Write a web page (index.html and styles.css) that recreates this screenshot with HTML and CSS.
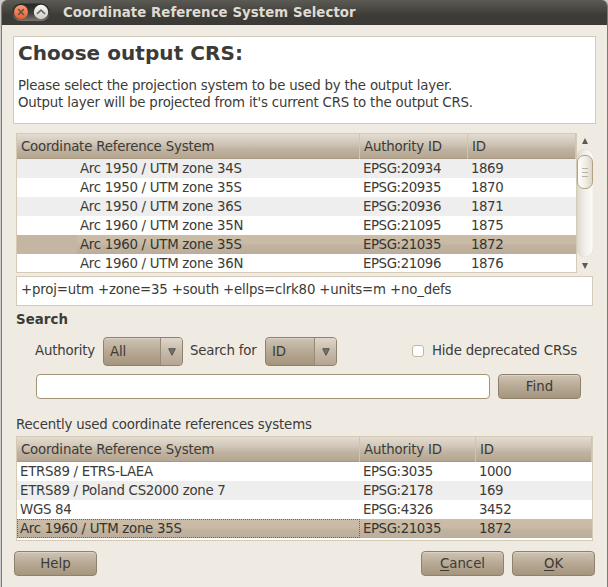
FILE: index.html
```html
<!DOCTYPE html>
<html lang="en">
<head>
<meta charset="utf-8">
<title>Coordinate Reference System Selector</title>
<link rel="stylesheet" href="styles.css">
</head>
<body>
<div class="window">
  <header class="titlebar">
    <div class="controls">
      <svg width="40" height="20" viewBox="0 0 40 20">
        <defs>
          <linearGradient id="pill" x1="0" y1="0" x2="0" y2="1"><stop offset="0" stop-color="#292825"/><stop offset=".55" stop-color="#3b3a37"/><stop offset="1" stop-color="#777670"/></linearGradient>
          <linearGradient id="red" x1="0" y1="0" x2="0" y2="1"><stop offset="0" stop-color="#f89a78"/><stop offset="1" stop-color="#e9602c"/></linearGradient>
          <linearGradient id="gray" x1="0" y1="0" x2="0" y2="1"><stop offset="0" stop-color="#fbfaf8"/><stop offset="1" stop-color="#cfcbc3"/></linearGradient>
        </defs>
        <rect x="1" y="0.500" width="38" height="17.5" rx="8.7" fill="url(#pill)"/>
        <circle cx="10" cy="9" r="7" fill="url(#red)"/>
        <path d="M7.200 6.200l5.600 5.600M12.800 6.200l-5.600 5.600" stroke="#6b5548" stroke-width="1.700"/>
        <circle cx="30" cy="9" r="7.200" fill="url(#gray)"/>
        <path d="M26 10.800l4-3.600 4 3.600" fill="none" stroke="#6b6964" stroke-width="1.700"/>
      </svg>
    </div>
    <h1 class="title">Coordinate Reference System Selector</h1>
  </header>

  <section class="intro">
    <h2>Choose output CRS:</h2>
    <p>Please select the projection system to be used by the output layer.<br>Output layer will be projected from it's current CRS to the output CRS.</p>
  </section>

  <div class="tree">
    <div class="table systems">
      <div class="row head"><span>Coordinate Reference System</span><span>Authority ID</span><span>ID</span></div>
      <div class="row alt"><span>Arc 1950 / UTM zone 34S</span><span>EPSG:20934</span><span>1869</span></div>
      <div class="row"><span>Arc 1950 / UTM zone 35S</span><span>EPSG:20935</span><span>1870</span></div>
      <div class="row alt"><span>Arc 1950 / UTM zone 36S</span><span>EPSG:20936</span><span>1871</span></div>
      <div class="row"><span>Arc 1960 / UTM zone 35N</span><span>EPSG:21095</span><span>1875</span></div>
      <div class="row selected"><span>Arc 1960 / UTM zone 35S</span><span>EPSG:21035</span><span>1872</span></div>
      <div class="row"><span>Arc 1960 / UTM zone 36N</span><span>EPSG:21096</span><span>1876</span></div>
    </div>
    <div class="scrollbar">
      <svg class="arrow" width="6" height="6" viewBox="0 0 6 6"><path d="M3 0L6 6H0z"/></svg>
      <div class="track"><div class="thumb"><i></i><i></i><i></i></div></div>
      <svg class="arrow" width="6" height="6" viewBox="0 0 6 6"><path d="M0 0H6L3 6z"/></svg>
    </div>
  </div>

  <div class="proj">+proj=utm +zone=35 +south +ellps=clrk80 +units=m +no_defs</div>

  <h3 class="search-title">Search</h3>
  <div class="filters">
    <span class="authority">Authority</span>
    <div class="combo wide"><span>All</span><b><svg width="8" height="8" viewBox="0 0 8 8"><path d="M.7 .7H7.300L4 7.300z"/></svg></b></div>
    <span class="search-for">Search for</span>
    <div class="combo"><span>ID</span><b><svg width="8" height="8" viewBox="0 0 8 8"><path d="M.7 .7H7.300L4 7.300z"/></svg></b></div>
    <label class="deprecated"><span class="check"></span><span>Hide deprecated CRSs</span></label>
  </div>
  <div class="find-row"><div class="field"></div><div class="button">Find</div></div>

  <h4 class="recent-title">Recently used coordinate references systems</h4>
  <div class="table recent">
    <div class="row head"><span>Coordinate Reference System</span><span>Authority ID</span><span>ID</span></div>
    <div class="row"><span>ETRS89 / ETRS-LAEA</span><span>EPSG:3035</span><span>1000</span></div>
    <div class="row alt"><span>ETRS89 / Poland CS2000 zone 7</span><span>EPSG:2178</span><span>169</span></div>
    <div class="row"><span>WGS 84</span><span>EPSG:4326</span><span>3452</span></div>
    <div class="row selected"><span class="focus">Arc 1960 / UTM zone 35S</span><span>EPSG:21035</span><span>1872</span></div>
  </div>

  <footer class="actions">
    <div class="button help">Help</div>
    <div class="button"><span><u>C</u>ancel</span></div>
    <div class="button"><span><u>O</u>K</span></div>
  </footer>
</div>
</body>
</html>
```
FILE: styles.css
```css
* { box-sizing: border-box; }
body {
  margin: 0;
  width: 608px;
  height: 587px;
  overflow: hidden;
  background: #cfcdcb;
  font: 13.33px/17px "DejaVu Sans", sans-serif;
  letter-spacing: -0.18px;
  color: #3c3b37;
}
h1, h2, h3, h4, p { margin: 0; font-weight: normal; font-size: inherit; }
.window {
  height: 587px;
  margin-left: 1px;
  border: solid #83796b;
  border-width: 0 1px;
  background: #efebe3;
  border-radius: 6px 6px 0 0;
  overflow: hidden;
  white-space: nowrap;
}
.titlebar {
  display: flex;
  height: 25px;
  margin: 0 -1px;
  padding-left: 9px;
  background: linear-gradient(#5b5a54, #45443f 45%, #3c3b37 60%);
  border-left: 1px solid #3c3b37;
}
.controls { width: 40px; padding-top: 3px; }
.controls svg { display: block; }
.title { margin: 4px 0 0 12px; font-weight: bold; font-size: 13.33px; letter-spacing: 0.06px; color: #dfdbd2; }
.intro {
  width: 583px;
  height: 88px;
  margin: 11px 0 0 11px;
  padding: 4px 4px 0;
  border: 1px solid #d5cab8;
  background: #fff;
}
.intro h2 { font-weight: bold; font-size: 20px; line-height: 25px; letter-spacing: 0.06px; }
.intro p { margin-top: 11px; letter-spacing: -0.19px; }
.tree { display: flex; height: 140px; margin: 9px 0 0 14px; }
.table { border: 1px solid #d5cab5; background: #fff; overflow: hidden; }
.systems { width: 561px; }
.row { display: grid; height: 19px; line-height: 19px; letter-spacing: -0.27px; }
.systems .row { grid-template-columns: 343px 108px 108px; }
.recent .row { grid-template-columns: 343px 116px 116px; }
.row span { padding-left: 3px; }
.row:not(.head) span + span { letter-spacing: -0.42px; }
.systems .row:not(.head) span:first-child { padding-left: 63px; }
.alt { background: #eee; }
.selected { background: linear-gradient(#cbbda7, #c8baa5 45%, #c1b39f 55%, #bbad99); color: #35342f; }
.systems .selected { background: linear-gradient(90deg, #c4b6a2 60px, transparent 60px), linear-gradient(#cbbda7, #c8baa5 45%, #c1b39f 55%, #bbad99); }
.row.head {
  height: 25px;
  line-height: 25px;
  letter-spacing: -0.19px;
  background: linear-gradient(#e3dcd1, #d3c9bb 35%, #bfb2a0 65%, #b4a691);
  border-bottom: 1px solid #a99981;
}
.head span { padding-left: 4px; border-right: 1px solid #d0c5b4; }
.focus { outline: 1px dotted #6e6759; outline-offset: -1px; }
.scrollbar {
  display: flex;
  flex-direction: column;
  align-items: center;
  width: 16px;
  padding: 5px 0 4px;
}
.arrow { display: block; fill: #5c5951; flex: none; }
.track {
  width: 16px;
  height: 108px;
  margin: 5px 0 6px;
  padding-top: 6px;
  border-radius: 8px;
  background: linear-gradient(90deg, #ded8cc, #f2efe9 50%, #fdfcfa);
  box-shadow: inset 0 0 1px #c9bfad;
}
.thumb {
  display: flex;
  flex-direction: column;
  align-items: center;
  gap: 2px;
  height: 34px;
  padding-top: 12px;
  border: 1px solid #b3a384;
  border-radius: 7px;
  background: linear-gradient(90deg, #fff, #f2eee8 50%, #ddd5c8);
}
.thumb i { width: 6px; height: 1px; margin-bottom: 1px; background: #bdb29d; }
.proj {
  width: 577px;
  height: 30px;
  margin: 3px 0 0 14px;
  padding: 4px;
  border: 1px solid #d5cab8;
  background: #fff;
}
.search-title { margin: 5px 0 0 14px; font-weight: bold; letter-spacing: 0.06px; }
.filters { display: flex; height: 29px; margin: 9px 0 0 33px; line-height: 28px; }
.authority { width: 68px; }
.search-for { width: 75px; padding-left: 7px; }
.combo {
  display: flex;
  width: 72px;
  height: 29px;
  border: 1px solid #8f826d;
  border-radius: 4px;
  background: linear-gradient(#cfc3b3, #b7a994 50%, #a5957d);
  box-shadow: inset 0 1px #dcd3c6;
  overflow: hidden;
}
.combo.wide { width: 80px; }
.combo span { flex: 1; padding-left: 6px; line-height: 27px; }
.combo b {
  display: flex;
  width: 22px;
  justify-content: center;
  padding: 10px 0 0 1px;
  border-left: 1px solid #978a77;
  background: linear-gradient(#dfd7cb, #c6baa9 50%, #b4a692);
}
.combo path { fill: #77736a; stroke: #55534c; }
.combo.wide + .search-for { width: 82px; }
.deprecated { display: flex; margin-left: 75px; line-height: 27px; }
.check {
  width: 12px;
  height: 12px;
  margin: 8px 8px 0 0;
  border: 1px solid #c3b7a2;
  border-radius: 3px;
  background: #fff;
}
.find-row { display: flex; gap: 8px; margin: 8px 0 0 34px; }
.field {
  width: 454px;
  height: 25px;
  border: 1px solid #a39476;
  border-radius: 4px;
  background: #fff;
}
.button {
  width: 83px;
  height: 25px;
  border: 1px solid #8f826d;
  border-radius: 4px;
  background: linear-gradient(#cfc3b3, #b7a994 50%, #a5957d);
  box-shadow: inset 0 1px #dcd3c6;
  text-align: center;
  line-height: 23px;
  letter-spacing: 0;
}
.recent-title { margin: 17px 0 0 14px; }
.recent { width: 577px; height: 105px; margin: 3px 0 0 14px; }
.actions { display: flex; gap: 8px; margin: 10px 0 0 12px; }
.help { margin-right: 316px; }
u { text-underline-offset: 2px; }
```
